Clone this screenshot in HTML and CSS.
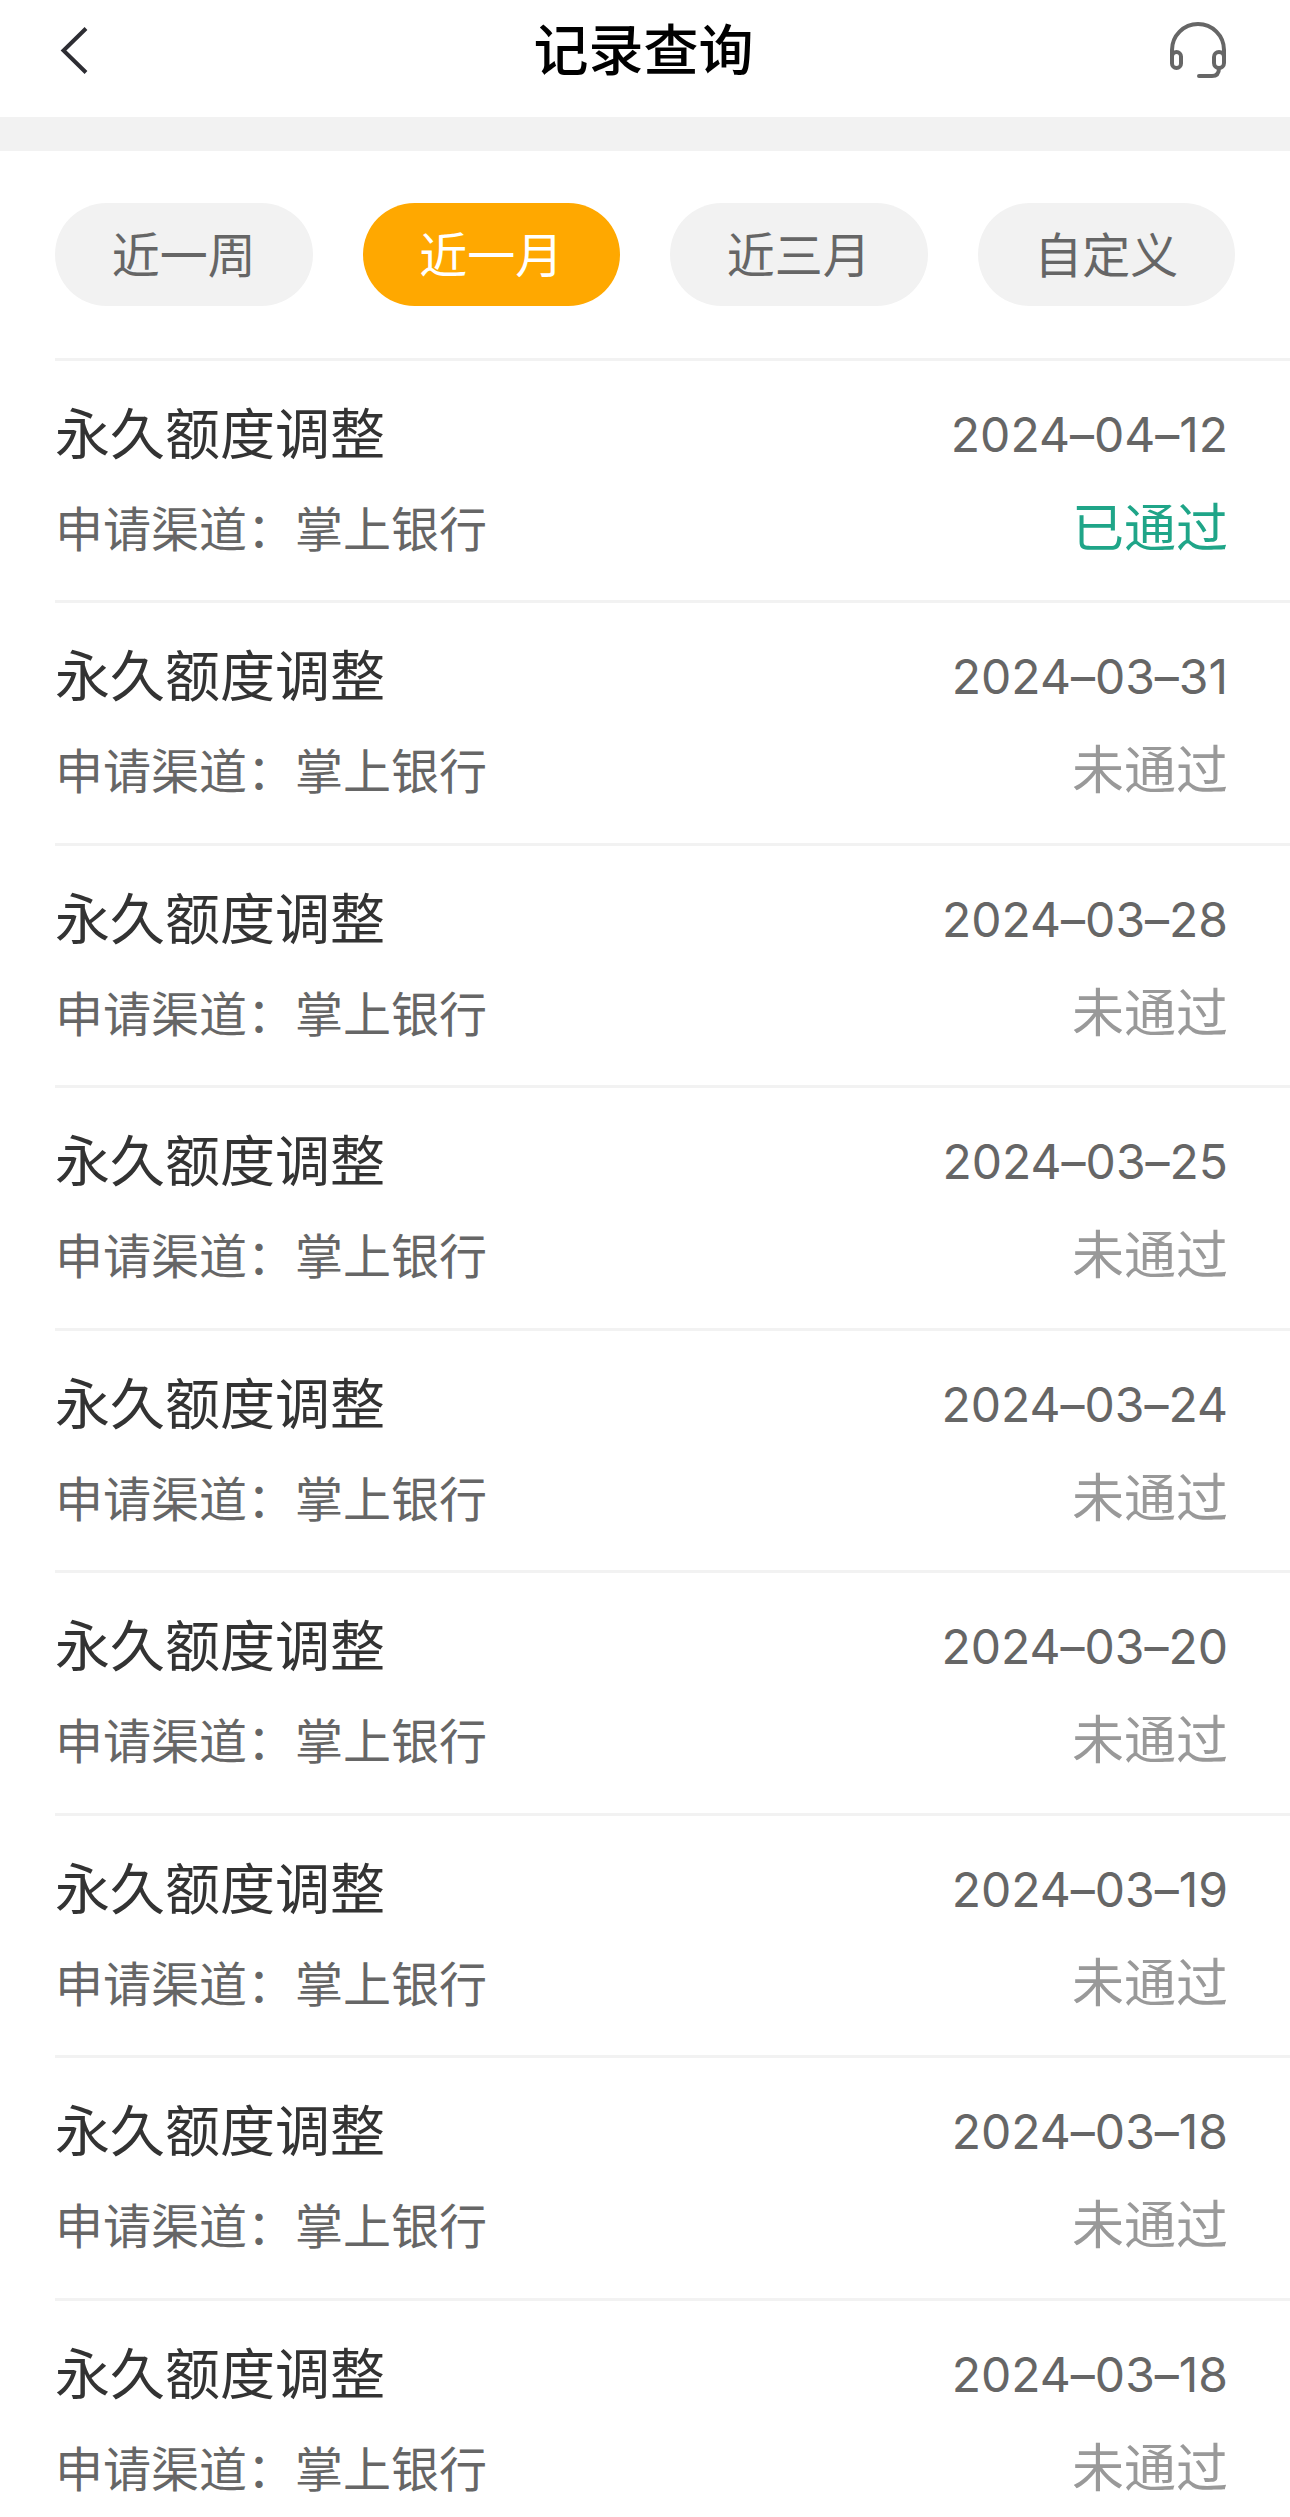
FILE: index.html
```html
<!DOCTYPE html>
<html lang="zh-CN">
<head>
    <meta charset="UTF-8">
    <meta name="viewport" content="width=device-width, initial-scale=1.0">
    <title>记录查询</title>
    <link rel="stylesheet" href="styles.css">
</head>
<body>

    <header class="header">
        <button type="button" class="icon-btn" aria-label="返回">
            <svg class="icon" viewBox="2 1 60 60">
                <path d="M31 8.500L8.500 30.500L31 52.500" fill="none" stroke="#2d2d33" stroke-width="4"/>
            </svg>
        </button>
        <h1>记录查询</h1>
        <button type="button" class="icon-btn" aria-label="客服">
            <svg class="icon" viewBox="3 1 60 60" fill="none" stroke="#666" stroke-width="4" stroke-linecap="round">
                <path d="M5 38V30a26 26 0 0 1 52 0v8"/>
                <rect x="5" y="32" width="9" height="16" rx="4.500"/>
                <rect x="47" y="32" width="10" height="16" rx="5"/>
                <path d="M52 48c0 5-2 8-7 8H32"/>
            </svg>
        </button>
    </header>

    <nav class="tabs">
        <button type="button" class="tab">近一周</button>
        <button type="button" class="tab active">近一月</button>
        <button type="button" class="tab">近三月</button>
        <button type="button" class="tab">自定义</button>
    </nav>

    <ul class="records" id="records">
        <li class="record">
            <div>
                <h2>永久额度调整</h2>
                <p class="channel">申请渠道：掌上银行</p>
            </div>
            <div class="result">
                <time datetime="2024-04-12">2024–04–12</time>
                <p class="status passed">已通过</p>
            </div>
        </li>
        <li class="record">
            <div>
                <h2>永久额度调整</h2>
                <p class="channel">申请渠道：掌上银行</p>
            </div>
            <div class="result">
                <time datetime="2024-03-31">2024–03–31</time>
                <p class="status">未通过</p>
            </div>
        </li>
        <li class="record">
            <div>
                <h2>永久额度调整</h2>
                <p class="channel">申请渠道：掌上银行</p>
            </div>
            <div class="result">
                <time datetime="2024-03-28">2024–03–28</time>
                <p class="status">未通过</p>
            </div>
        </li>
        <li class="record">
            <div>
                <h2>永久额度调整</h2>
                <p class="channel">申请渠道：掌上银行</p>
            </div>
            <div class="result">
                <time datetime="2024-03-25">2024–03–25</time>
                <p class="status">未通过</p>
            </div>
        </li>
        <li class="record">
            <div>
                <h2>永久额度调整</h2>
                <p class="channel">申请渠道：掌上银行</p>
            </div>
            <div class="result">
                <time datetime="2024-03-24">2024–03–24</time>
                <p class="status">未通过</p>
            </div>
        </li>
        <li class="record">
            <div>
                <h2>永久额度调整</h2>
                <p class="channel">申请渠道：掌上银行</p>
            </div>
            <div class="result">
                <time datetime="2024-03-20">2024–03–20</time>
                <p class="status">未通过</p>
            </div>
        </li>
        <li class="record">
            <div>
                <h2>永久额度调整</h2>
                <p class="channel">申请渠道：掌上银行</p>
            </div>
            <div class="result">
                <time datetime="2024-03-19">2024–03–19</time>
                <p class="status">未通过</p>
            </div>
        </li>
        <li class="record">
            <div>
                <h2>永久额度调整</h2>
                <p class="channel">申请渠道：掌上银行</p>
            </div>
            <div class="result">
                <time datetime="2024-03-18">2024–03–18</time>
                <p class="status">未通过</p>
            </div>
        </li>
        <li class="record">
            <div>
                <h2>永久额度调整</h2>
                <p class="channel">申请渠道：掌上银行</p>
            </div>
            <div class="result">
                <time datetime="2024-03-18">2024–03–18</time>
                <p class="status">未通过</p>
            </div>
        </li>
    </ul>

</body>
</html>
```

FILE: styles.css
```css
/* Root Variables */
:root {
    --primary: #ffa800;
    --green: #1fa588;
    --dark: #333;
    --text: #666;
    --muted: #999;
    --line: #f2f2f2;
}

* {
    box-sizing: border-box;
}

/* General Styles */
body {
    display: flex;
    flex-direction: column;
    height: 100vh;
    margin: 0;
    background: #fff;
    color: var(--text);
    font-family: "Liberation Sans", "Noto Sans CJK SC", sans-serif;
}

h1, h2, p, ul {
    margin: 0;
    padding: 0;
}

button {
    border: none;
    padding: 0;
    font-family: inherit;
    cursor: pointer;
}

/* Header */
.header {
    display: flex;
    justify-content: space-between;
    align-items: center;
    padding: 15px 60px 30px 57px;
    border-bottom: 34px solid var(--line);
}

.header h1 {
    color: #000;
    font-size: 55px;
    font-weight: 500;
    line-height: 72px;
}

.icon-btn {
    display: flex;
    background: none;
}

.icon {
    width: 60px;
    height: 60px;
}

/* Filter Tabs */
.tabs {
    display: flex;
    gap: 50px;
    padding: 52px 55px;
}

.tab {
    flex: 1;
    height: 103px;
    padding-bottom: 6px;
    border-radius: 52px;
    background: var(--line);
    color: var(--text);
    font-size: 48px;
}

.tab.active {
    background: var(--primary);
    color: #fff;
}

/* Record List */
.records {
    flex: 1;
    display: grid;
    grid-auto-rows: 242px 243px;
    align-content: start;
    min-height: 0;
    padding-left: 55px;
    overflow-y: auto;
    scrollbar-width: none;
    list-style: none;
}

.record {
    display: flex;
    justify-content: space-between;
    padding: 38px 62px 0 0;
    border-top: 3px solid var(--line);
}

.record h2, .record time {
    display: block;
    line-height: 72px;
}

.record h2 {
    margin-bottom: 24px;
    color: var(--dark);
    font-size: 55px;
    font-weight: 400;
}

.channel, .status {
    line-height: 72px;
}

.channel {
    font-size: 48px;
}

.result {
    text-align: right;
}

/* keep the dashes low between the digits */
.record time {
    margin-bottom: 22px;
    font-family: Inter, "Noto Sans CJK SC", sans-serif;
    font-size: 48px;
    font-weight: 400;
    font-variant-ligatures: no-contextual;
}

.status {
    color: var(--muted);
    font-size: 52px;
}

.status.passed {
    color: var(--green);
}
```
